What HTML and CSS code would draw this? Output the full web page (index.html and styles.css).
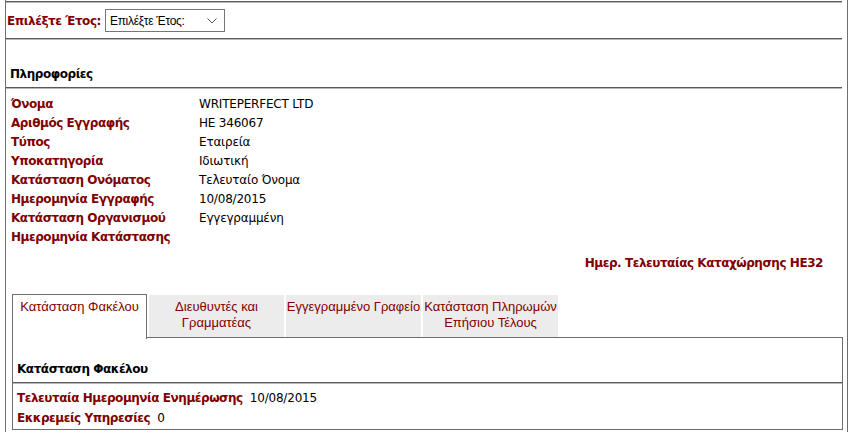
FILE: index.html
```html
<!DOCTYPE html>
<html lang="el">
<head>
<meta charset="utf-8">
<title>Πληροφορίες</title>
<link rel="stylesheet" href="styles.css">
</head>
<body>
<div class="page">
  <hr class="rule rule-top">
  <div class="year-row">
    <label class="year-label" for="year">Επιλέξτε Έτος:</label>
    <div class="select">
      <span class="select-text">Επιλέξτε Έτος:</span>
      <svg class="chev" width="10" height="6" viewBox="0 0 10 6"><path d="M0.5 0.5 L5 5 L9.5 0.5" fill="none" stroke="#555" stroke-width="1"/></svg>
    </div>
  </div>
  <hr class="rule">
  <div class="section-title">Πληροφορίες</div>
  <hr class="rule">
  <div class="info">
    <div class="lbl">Όνομα</div><div class="val">WRITEPERFECT LTD</div>
    <div class="lbl">Αριθμός Εγγραφής</div><div class="val">HE 346067</div>
    <div class="lbl">Τύπος</div><div class="val">Εταιρεία</div>
    <div class="lbl">Υποκατηγορία</div><div class="val">Ιδιωτική</div>
    <div class="lbl">Κατάσταση Ονόματος</div><div class="val">Τελευταίο Όνομα</div>
    <div class="lbl">Ημερομηνία Εγγραφής</div><div class="val">10/08/2015</div>
    <div class="lbl">Κατάσταση Οργανισμού</div><div class="val">Εγγεγραμμένη</div>
    <div class="lbl">Ημερομηνία Κατάστασης</div><div class="val"></div>
  </div>
  <div class="last-entry">Ημερ. Τελευταίας Καταχώρησης ΗΕ32</div>
  <div class="tabs">
    <div class="tab active">Κατάσταση Φακέλου</div>
    <div class="tab">Διευθυντές και<br>Γραμματέας</div>
    <div class="tab">Εγγεγραμμένο Γραφείο</div>
    <div class="tab">Κατάσταση Πληρωμών<br>Επήσιου Τέλους</div>
  </div>
  <div class="panel">
    <div class="panel-title">Κατάσταση Φακέλου</div>
    <hr class="rule panel-rule">
    <div class="panel-row first"><span class="plbl">Τελευταία Ημερομηνία Ενημέρωσης</span><span class="pval">10/08/2015</span></div>
    <div class="panel-row"><span class="plbl">Εκκρεμείς Υπηρεσίες</span><span class="pval">0</span></div>
  </div>
</div>
</body>
</html>
```
FILE: styles.css
```css
html, body {
  margin: 0;
  padding: 0;
  background: #fff;
}
body {
  font-family: "DejaVu Sans", Verdana, sans-serif;
  font-size: 12px;
  color: #000;
  letter-spacing: -0.2px;
}
.page {
  margin-left: 5px;
  width: 841px;
  height: 432px;
  border-left: 1px solid #6e6e6e;
  border-right: 1px solid #6e6e6e;
  overflow: hidden;
}
.rule {
  margin: 0 5px 0 0;
  height: 0;
  border: 0;
  border-top: 1px solid #5a5a5a;
  border-bottom: 1px solid #b8b8b8;
}
.rule-top {
  margin-top: 1px;
}
.year-row {
  display: flex;
  align-items: center;
  height: 23px;
  padding: 6px 0 6px 1px;
}
.year-label {
  font-weight: bold;
  color: #800000;
  letter-spacing: -0.45px;
  margin-right: 4px;
}
.select {
  border: 1px solid #767676;
  display: flex;
  align-items: center;
  justify-content: space-between;
  padding: 0 7px 0 4px;
  box-sizing: border-box;
  width: 120px;
  height: 23px;
  font-family: "Liberation Sans", Arial, sans-serif;
  font-size: 12px;
  letter-spacing: -0.3px;
}
.chev {
  display: block;
}
.section-title {
  font-weight: bold;
  letter-spacing: -0.45px;
  padding: 26px 0 0 4px;
  height: 21px;
  line-height: 16px;
}
.info {
  display: grid;
  grid-template-columns: 188px auto;
  grid-auto-rows: 19px;
  padding: 6px 0 0 5px;
  line-height: 19px;
}
.lbl {
  font-weight: bold;
  color: #800000;
  letter-spacing: -0.45px;
}
.last-entry {
  text-align: right;
  font-weight: bold;
  color: #800000;
  letter-spacing: -0.45px;
  padding: 8px 24px 0 0;
  line-height: 16px;
  height: 39px;
}
.tabs {
  display: flex;
  align-items: flex-start;
  padding-left: 6px;
  gap: 2px;
  height: 44px;
  font-family: "Liberation Sans", Arial, sans-serif;
  font-size: 13px;
  letter-spacing: 0;
  color: #800000;
}
.tab {
  background: #ececec;
  margin-top: 1px;
  height: 42px;
  width: 135px;
  text-align: center;
  line-height: 16px;
  padding-top: 4px;
  box-sizing: border-box;
}
.tab.active {
  background: #fff;
  border: 1px solid #6e6e6e;
  border-bottom: 0;
  margin-top: 0;
  height: 45px;
  position: relative;
  z-index: 1;
  padding-top: 4px;
}
.panel {
  margin: -1px 4px 0 6px;
  border: 1px solid #6e6e6e;
  height: 93px;
  box-sizing: border-box;
}
.panel-title {
  font-weight: bold;
  letter-spacing: -0.45px;
  padding: 23px 0 0 4px;
  height: 21px;
  line-height: 16px;
}
.panel-rule {
  margin-right: 0;
}
.panel-row {
  padding-left: 4px;
  height: 20px;
  line-height: 20px;
}
.panel-row.first {
  margin-top: 4px;
}
.plbl {
  font-weight: bold;
  color: #800000;
  letter-spacing: -0.45px;
  margin-right: 7px;
}
```
